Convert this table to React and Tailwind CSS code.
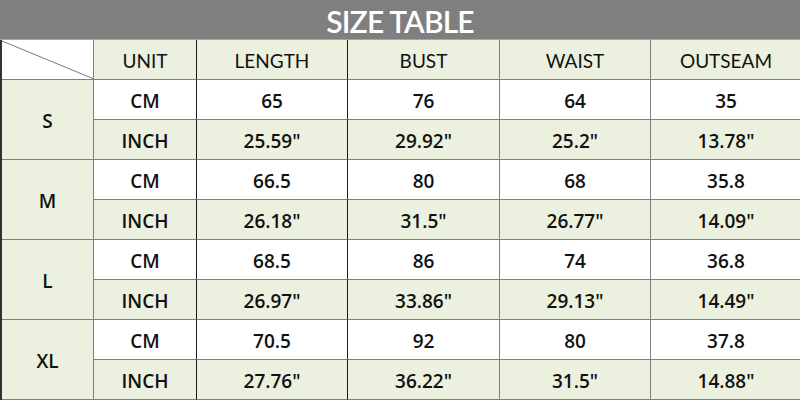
const sizes = [
  { name: "S", cm: ["65", "76", "64", "35"], inch: ['25.59"', '29.92"', '25.2"', '13.78"'] },
  { name: "M", cm: ["66.5", "80", "68", "35.8"], inch: ['26.18"', '31.5"', '26.77"', '14.09"'] },
  { name: "L", cm: ["68.5", "86", "74", "36.8"], inch: ['26.97"', '33.86"', '29.13"', '14.49"'] },
  { name: "XL", cm: ["70.5", "92", "80", "37.8"], inch: ['27.76"', '36.22"', '31.5"', '14.88"'] },
];

const headers = ["LENGTH", "BUST", "WAIST", "OUTSEAM"];
// right border of each measurement column (LENGTH and BUST have the dark rule)
const colBorder = ["border-r-[#1c1c1c]", "border-r-[#808080]", "border-r-[#808080]", "border-r-[#808080]"];

const cell = "flex items-center justify-center pt-[3px] border-r border-b border-[#808080]";
const data = "font-['Open_Sans',sans-serif] font-semibold text-[19px]";

export default function App() {
  return (
    <div className="w-[800px] h-[400px] bg-white font-['Liberation_Sans',Arial,sans-serif] text-[#111]">
      <div className="h-[40px] bg-[#7f7f7f] border-b border-[#a6a6a6] flex items-center justify-center pt-[3px]">
        <span className="text-white text-[30px] font-['Lato',sans-serif] font-semibold tracking-[-0.8px] leading-normal">SIZE TABLE</span>
      </div>

      <div className="grid grid-cols-[92px_103px_151px_152px_151px_151px] auto-rows-[40px] border-l-2 border-l-[#333]">
        {/* header row */}
        <div className="relative border-r border-b border-[#808080] bg-white overflow-hidden">
          <svg className="absolute inset-0" width="92" height="40">
            <line x1="0" y1="1" x2="92" y2="39" stroke="#7a7a7a" strokeWidth="1" />
          </svg>
        </div>
        <div className={`${cell} bg-[#ebf1de] border-r-[#1c1c1c] font-['Lato',sans-serif] text-[19px]`}>
          UNIT
        </div>
        {headers.map((h, i) => (
          <div key={h} className={`${cell} bg-[#ebf1de] font-['Lato',sans-serif] text-[19px] ${colBorder[i]}`}>
            {h}
          </div>
        ))}

        {sizes.map((s) => (
          <SizeRows key={s.name} size={s} />
        ))}
      </div>
    </div>
  );
}

function SizeRows({ size }) {
  return (
    <>
      <div className={`${cell} row-span-2 bg-[#ebf1de] ${data}`}>{size.name}</div>
      <div className={`${cell} bg-white border-r-[#1c1c1c] ${data}`}>CM</div>
      {size.cm.map((v, i) => (
        <div key={"cm" + i} className={`${cell} bg-white ${data} ${colBorder[i]}`}>
          {v}
        </div>
      ))}
      <div className={`${cell} bg-[#ebf1de] border-r-[#1c1c1c] ${data}`}>INCH</div>
      {size.inch.map((v, i) => (
        <div key={"in" + i} className={`${cell} bg-[#ebf1de] ${data} ${colBorder[i]}`}>
          {v}
        </div>
      ))}
    </>
  );
}
